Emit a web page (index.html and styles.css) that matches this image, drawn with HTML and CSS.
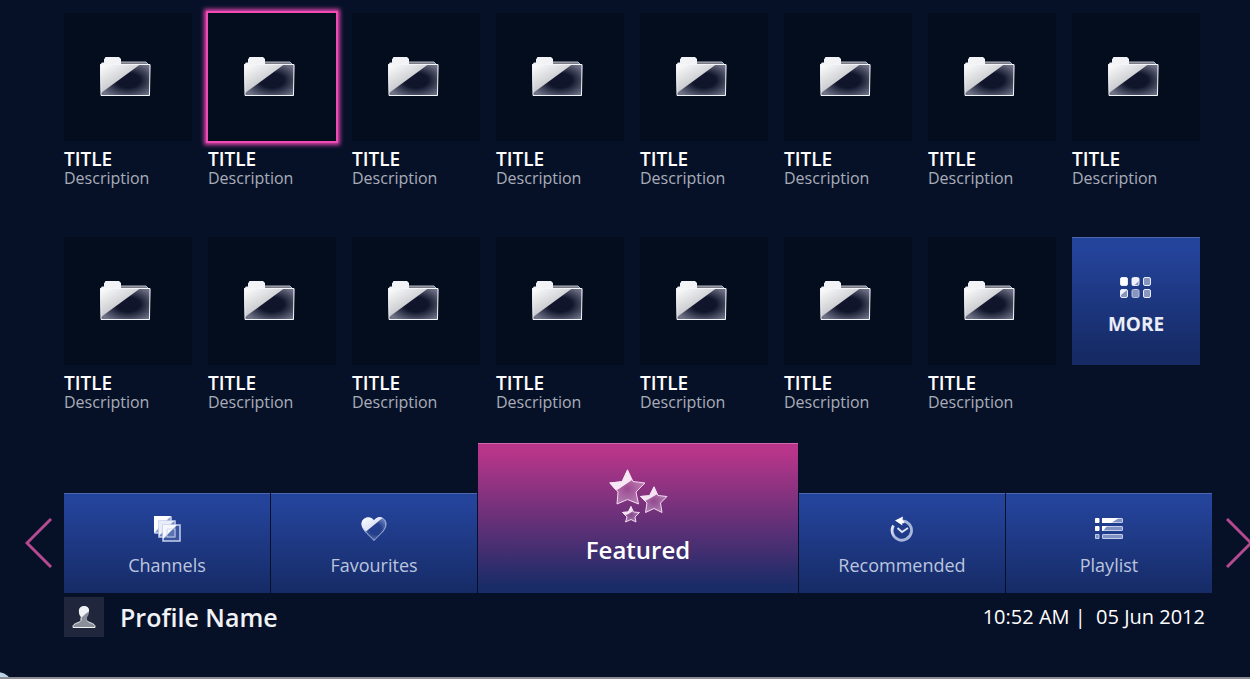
FILE: index.html
```html
<!DOCTYPE html>
<html lang="en">
<head>
    <meta charset="UTF-8">
    <meta name="viewport" content="width=device-width, initial-scale=1.0">
    <title>Featured</title>
    <link rel="stylesheet" href="styles.css">
</head>

<body>
    <!-- shared shapes and gradients -->
    <svg class="sprite" aria-hidden="true">
        <defs>
            <linearGradient id="shine" x1="0" y1="0" x2="0.8" y2="1">
                <stop offset="0" stop-color="#ffffff"/>
                <stop offset="1" stop-color="#a9abb1"/>
            </linearGradient>
            <linearGradient id="heartShine" x1="0" y1="0" x2="1" y2="1">
                <stop offset="0" stop-color="#ffffff"/>
                <stop offset="1" stop-color="#c5d0ec"/>
            </linearGradient>
            <radialGradient id="glass" cx="0.55" cy="0.5" r="0.6">
                <stop offset="0.4" stop-color="#e8ecff" stop-opacity="0.02"/>
                <stop offset="1" stop-color="#e8ecff" stop-opacity="0.45"/>
            </radialGradient>
            <radialGradient id="starGlass" cx="0.5" cy="0.55" r="0.5">
                <stop offset="0" stop-color="#f3d0ec" stop-opacity="0.15"/>
                <stop offset="1" stop-color="#f3d0ec" stop-opacity="0.5"/>
            </radialGradient>
            <linearGradient id="fade" x1="0" y1="0" x2="1" y2="0.6">
                <stop offset="0" stop-color="#ffffff"/>
                <stop offset="0.5" stop-color="#a9b6dc"/>
            </linearGradient>
            <symbol id="folder" viewBox="0 0 52 42">
                <path d="M22 6h25l2.500 2.500H20z" fill="#787b86" stroke="#b5b8c0"/>
                <path d="M1 9l2-2.500h2V3.500L6.500 1H20l2 2v5.500h29v1H1z" fill="#f2f3f6"/>
                <path d="M1.500 9h50l-1 31H2z" fill="#0c1128"/>
                <path d="M1.500 9h50l-1 31H2z" fill="url(#glass)"/>
                <path d="M1 8.500h40L2 37z" fill="url(#shine)"/>
                <path d="M1.500 8.500h49.500l-.500 31H2z" fill="none" stroke="#f4f5f8"/>
            </symbol>
        </defs>
    </svg>

    <main>
        <ul class="tiles">
            <li><a class="tile" href="#"><span class="thumb"><svg class="folder"><use href="#folder"/></svg></span><span class="title">TITLE</span><span class="desc">Description</span></a></li>
            <li><a class="tile selected" href="#"><span class="thumb"><svg class="folder"><use href="#folder"/></svg></span><span class="title">TITLE</span><span class="desc">Description</span></a></li>
            <li><a class="tile" href="#"><span class="thumb"><svg class="folder"><use href="#folder"/></svg></span><span class="title">TITLE</span><span class="desc">Description</span></a></li>
            <li><a class="tile" href="#"><span class="thumb"><svg class="folder"><use href="#folder"/></svg></span><span class="title">TITLE</span><span class="desc">Description</span></a></li>
            <li><a class="tile" href="#"><span class="thumb"><svg class="folder"><use href="#folder"/></svg></span><span class="title">TITLE</span><span class="desc">Description</span></a></li>
            <li><a class="tile" href="#"><span class="thumb"><svg class="folder"><use href="#folder"/></svg></span><span class="title">TITLE</span><span class="desc">Description</span></a></li>
            <li><a class="tile" href="#"><span class="thumb"><svg class="folder"><use href="#folder"/></svg></span><span class="title">TITLE</span><span class="desc">Description</span></a></li>
            <li><a class="tile" href="#"><span class="thumb"><svg class="folder"><use href="#folder"/></svg></span><span class="title">TITLE</span><span class="desc">Description</span></a></li>
            <li><a class="tile" href="#"><span class="thumb"><svg class="folder"><use href="#folder"/></svg></span><span class="title">TITLE</span><span class="desc">Description</span></a></li>
            <li><a class="tile" href="#"><span class="thumb"><svg class="folder"><use href="#folder"/></svg></span><span class="title">TITLE</span><span class="desc">Description</span></a></li>
            <li><a class="tile" href="#"><span class="thumb"><svg class="folder"><use href="#folder"/></svg></span><span class="title">TITLE</span><span class="desc">Description</span></a></li>
            <li><a class="tile" href="#"><span class="thumb"><svg class="folder"><use href="#folder"/></svg></span><span class="title">TITLE</span><span class="desc">Description</span></a></li>
            <li><a class="tile" href="#"><span class="thumb"><svg class="folder"><use href="#folder"/></svg></span><span class="title">TITLE</span><span class="desc">Description</span></a></li>
            <li><a class="tile" href="#"><span class="thumb"><svg class="folder"><use href="#folder"/></svg></span><span class="title">TITLE</span><span class="desc">Description</span></a></li>
            <li><a class="tile" href="#"><span class="thumb"><svg class="folder"><use href="#folder"/></svg></span><span class="title">TITLE</span><span class="desc">Description</span></a></li>
            <li>
                <a class="more" href="#">
                    <svg width="32" height="22" viewBox="0 0 32 22" fill="#8795bf" stroke="#e6ebf8">
                        <rect x="0.500" y="0.500" width="7" height="8" rx="1.500" fill="#fff"/>
                        <rect x="12" y="0.500" width="7" height="8" rx="1.500"/>
                        <path d="M12 1h7v3l-5 4.500h-2z" fill="#eef1fa" stroke="none"/>
                        <rect x="23.500" y="0.500" width="7" height="8" rx="1.500"/>
                        <rect x="0.500" y="12.500" width="7" height="8" rx="1.500"/>
                        <path d="M1 13h6l-6 5z" fill="#eef1fa" stroke="none"/>
                        <rect x="12" y="12.500" width="7" height="8" rx="1.500" stroke="#b9c4e2"/>
                        <rect x="23.500" y="12.500" width="7" height="8" rx="1.500"/>
                    </svg>
                    <span>MORE</span>
                </a>
            </li>
        </ul>
    </main>

    <div class="menu">
        <button class="arrow prev" type="button" aria-label="Previous">
            <svg width="28" height="50" viewBox="0 0 28 50"><path d="M26 1L2 25l24 24"/></svg>
        </button>
        <nav class="tabs">
            <a class="tab" href="#">
                <svg width="28" height="28" viewBox="0 0 28 28" fill="none" stroke="#c6d0ec" stroke-width="1.500">
                    <path d="M2 2h16v16H2z" fill="#8fa0cf"/>
                    <path d="M1 1h17L1 18z" fill="#fff" stroke="none"/>
                    <path d="M6 6h16v16H6z" fill="#7488c0"/>
                    <path d="M6 6h15L6 21z" fill="#e9edf8" stroke="none"/>
                    <path d="M10 10h17v16H10z" fill="#4b65ac" fill-opacity="0.600"/>
                    <path d="M10 10h14L10 24z" fill="#f6f8fd" stroke="none"/>
                    <path d="M14 14h8v8h-8z" stroke-width="1" opacity="0.700"/>
                </svg>
                <span>Channels</span>
            </a>
            <a class="tab" href="#">
                <svg width="26" height="26" viewBox="0 0 26 26">
                    <path d="M13 24.500C9 19.500 1 15 1 8 1 1 10 -.500 13 5c3-5.500 12-4 12 3 0 7-8 11.500-12 16.500z" fill="url(#glass)" stroke="#aebcdf"/>
                    <path d="M5 15.500C2.500 13 .500 11 .500 8 .500 1 10-.500 13 4.500c2-3 6-4.500 8.500-2.500z" fill="url(#heartShine)"/>
                </svg>
                <span>Favourites</span>
            </a>
            <a class="tab active" href="#">
                <svg width="60" height="56" viewBox="0 0 60 56" stroke="#f3d9ee" stroke-linejoin="round" fill="url(#starGlass)">
                    <path d="M19.500 2L25 13.500 37 15l-9 9 2.500 12-11-4.500L9 36l1-12-8-9 12-1.500z"/>
                    <path d="M19.500 1L24 12 10 21.500 7.500 22 1 14.500l13-1z" fill="#f7e8f5" stroke="none"/>
                    <path d="M46 19l4 8.500 9 1-6.500 6.500 1.500 9.500-8-4-8.500 4L39 35l-6.500-6.500 9-1z"/>
                    <path d="M46 18l3.500 8-8.500 5-4 2-5-5 9.500-.500z" fill="#f3e3f3" stroke="none"/>
                    <path d="M23 38.500l2.500 5.500 6 .500L27 49l1 5-5-2.500-5.500 2.500 1.500-5-4.500-4.500 6-.500z"/>
                    <path d="M23 38l2 5-4.500 3-3 1-3.500-3 6-.500z" fill="#f3e3f3" stroke="none"/>
                </svg>
                <span>Featured</span>
            </a>
            <a class="tab" href="#">
                <svg width="24" height="26" viewBox="0 0 24 26" fill="none">
                    <path d="M3.500 9.500A9.700 9.700 0 1 0 12.500 4.800" stroke="url(#fade)" stroke-width="2.800"/>
                    <path d="M5 4.500L13 .500l-.500 3 2 3.500-2.500.500.500 2z" fill="#fff"/>
                    <path d="M7.500 12l4.500 4 6-4" stroke="#dfe6f6" stroke-width="1.800"/>
                </svg>
                <span>Recommended</span>
            </a>
            <a class="tab" href="#">
                <svg width="28" height="22" viewBox="0 0 28 22" fill="#7f90c2" stroke="#c3cde9">
                    <path d="M.500.500h3.500v4H.500zM.500 8.500h3.500v4H.500z" fill="#fff" stroke="#fff"/>
                    <path d="M.500 16.500h3.500v4H.500z"/>
                    <rect x="7.500" y="0.500" width="20" height="4" rx="0.500"/>
                    <path d="M7 0h17l-8 5H7z" fill="#fff" stroke="none"/>
                    <rect x="7.500" y="8.500" width="20" height="4" rx="0.500"/>
                    <path d="M7 8h5l-4 5H7z" fill="#fff" stroke="none"/>
                    <rect x="7.500" y="16.500" width="20" height="4" rx="0.500"/>
                </svg>
                <span>Playlist</span>
            </a>
        </nav>
        <button class="arrow next" type="button" aria-label="Next">
            <svg width="28" height="50" viewBox="0 0 28 50"><path d="M1 1l24 24L1 49"/></svg>
        </button>
    </div>

    <footer>
        <span class="avatar">
            <svg width="24" height="24" viewBox="0 0 24 24">
                <path d="M12 1.500c4 0 5.500 2.500 5 6-.300 2-1 3.500-2 5v3c1 2.500 8 2.500 8 6v1H1v-1c0-3.500 7-3.500 8-6v-3c-1-1.500-1.700-3-2-5-.500-3.500 1-6 5-6z" fill="#8a8e99"/>
                <path d="M12 1c4 0 5.500 2.500 5 5.500l-3 2-4.500 4C8 11 7.300 9.500 7 7.500 6.500 4 8 1 12 1z" fill="#f1f2f4"/>
                <path d="M9 12.500v3c-1 2.500-8 2.500-8 6v1h22v-1c0-3.500-7-3.500-8-6" fill="none" stroke="#f1f2f4"/>
            </svg>
        </span>
        <span class="profile">Profile Name</span>
        <time datetime="2012-06-05T10:52">10:52 AM |&nbsp; 05 Jun 2012</time>
    </footer>
    <div class="edge"><svg width="10" height="5" viewBox="0 0 10 5"><circle cx="-2" cy="14" r="14" fill="#b9d3e2"/></svg></div>
</body>
</html>
```

FILE: styles.css
```css
* {
    box-sizing: border-box;
}

body {
    margin: 0;
    min-height: 100vh;
    display: flex;
    flex-direction: column;
    overflow: hidden;
    background: #061128;
    color: #fff;
    font-family: "Open Sans", sans-serif;
}

a {
    color: inherit;
    text-decoration: none;
}

svg {
    display: block;
}

.sprite {
    position: absolute;
    width: 0;
    height: 0;
}

/* tiles */
.tiles {
    display: grid;
    grid-template-columns: repeat(8, 1fr);
    gap: 49px 16px;
    margin: 0;
    padding: 13px 50px 0 64px;
    list-style: none;
}

.tile {
    display: block;
}

.thumb,
.more {
    display: flex;
    align-items: center;
    justify-content: center;
    aspect-ratio: 1;
}

.thumb {
    margin-bottom: 8px;
    background: #040d1e;
}

.folder {
    width: 52px;
    height: 42px;
    margin-right: 6px;
}

.selected .thumb {
    box-shadow: 0 0 0 2px #f04ab4, 0 0 4px 4px #d843a8;
}

.title,
.desc {
    display: block;
}

.title {
    font-size: 19px;
    line-height: 20px;
    font-weight: 600;
}

.desc {
    color: #a9adb8;
    font-size: 16px;
    line-height: 19px;
}

.more {
    flex-direction: column;
    gap: 12px;
    padding-top: 10px;
    border-top: 1px solid #4c68ad;
    background: linear-gradient(#24439a 10%, #162b66 90%);
    color: #e9edf8;
    font-size: 19px;
    line-height: 26px;
    font-weight: 700;
}

/* menu */
.menu {
    display: flex;
    align-items: flex-end;
    margin-top: 31px;
}

.arrow {
    flex: none;
    height: 100px;
    padding: 0;
    border: 0;
    background: none;
    cursor: pointer;
}

.arrow path {
    fill: none;
    stroke: #b54a90;
    stroke-width: 3;
}

.prev {
    width: 64px;
    padding-left: 25px;
}

.next {
    width: 38px;
    padding-left: 14px;
}

.tabs {
    flex: 1;
    display: grid;
    grid-template-columns: 1fr 1fr 320px 1fr 1fr;
    gap: 1px;
    align-items: end;
}

.tab {
    display: grid;
    grid-template-rows: 28px 24px;
    row-gap: 10px;
    place-items: center;
    height: 100px;
    padding-top: 21px;
    border-top: 1px solid #4c68ad;
    background: linear-gradient(#24439a 10%, #162b66);
    align-content: start;
    color: #bcc5df;
    font-size: 18px;
    line-height: 24px;
}

.tab.active {
    grid-template-rows: 56px 32px;
    height: 150px;
    padding-top: 24px;
    border-top-color: #cf6bad;
    background: linear-gradient(#b8358a 5%, #1a2c68 95%);
    color: #fff;
    font-size: 24px;
    line-height: 32px;
    font-weight: 600;
}

/* footer */
footer {
    display: flex;
    align-items: center;
    gap: 16px;
    padding: 4px 45px 0 64px;
}

.avatar {
    display: flex;
    align-items: center;
    justify-content: center;
    width: 40px;
    height: 40px;
    background: #20273c;
}

.profile {
    color: #f1f2f5;
    font-size: 25px;
    line-height: 40px;
    font-weight: 600;
}

time {
    margin-left: auto;
    font-size: 20px;
    line-height: 40px;
}

.edge {
    margin-top: auto;
    border-bottom: 2px solid #8c8d92;
}
```
